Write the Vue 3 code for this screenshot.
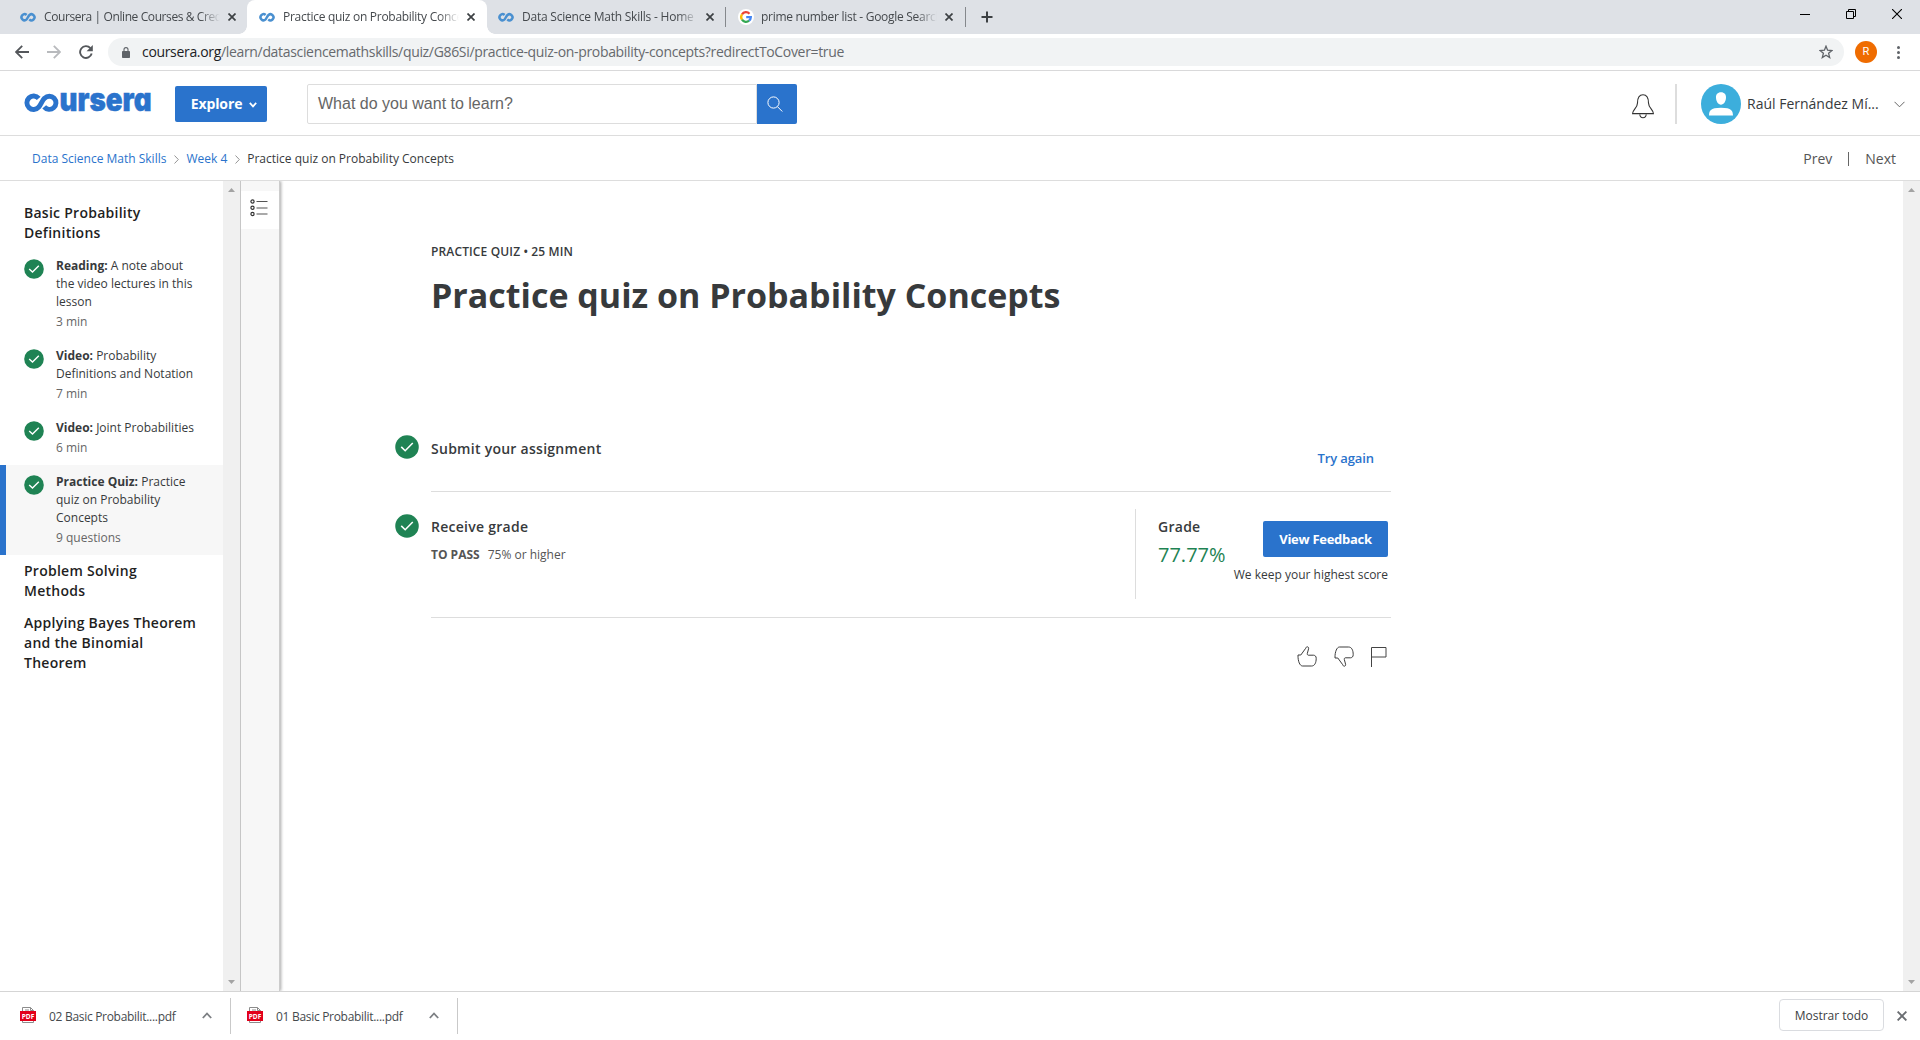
<script setup>
const tabs = [
  { title: 'Coursera | Online Courses & Credentials', icon: 'coursera', cls: 'tab-1' },
  { title: 'Practice quiz on Probability Concepts', icon: 'coursera', cls: 'tab-2 active' },
  { title: 'Data Science Math Skills - Home', icon: 'coursera', cls: 'tab-3' },
  { title: 'prime number list - Google Search', icon: 'google', cls: 'tab-4' },
]
const items = [
  { kind: 'Reading:', lines: ['A note about', 'the video lectures in this', 'lesson'], meta: '3 min' },
  { kind: 'Video:', lines: ['Probability', 'Definitions and Notation'], meta: '7 min' },
  { kind: 'Video:', lines: ['Joint Probabilities'], meta: '6 min' },
  { kind: 'Practice Quiz:', lines: ['Practice', 'quiz on Probability', 'Concepts'], meta: '9 questions', active: true },
]
const downloads = ['02 Basic Probabilit....pdf', '01 Basic Probabilit....pdf']
</script>

<template>
  <div class="window">
    <div class="tabstrip">
      <div v-for="t in tabs" :key="t.title" class="tab" :class="t.cls">
        <svg v-if="t.icon === 'coursera'" class="fav" width="16" height="16" viewBox="0 0 16 16">
          <path d="M6.6 6A3 3 0 1 0 6.6 10.4C7.500 9.500 8.300 7 9.500 6A3 3 0 1 1 9.300 10.400" fill="none" stroke="#4a90d0" stroke-width="2.500" />
        </svg>
        <svg v-else class="fav" width="16" height="16" viewBox="0 0 16 16">
          <circle cx="8" cy="8" r="8" fill="#fff" />
          <g fill="none" stroke-width="2.3">
            <path d="M4 5.3A4.8 4.8 0 0 1 11.5 4.7" stroke="#ea4335" />
            <path d="M4 5.3A4.8 4.8 0 0 0 4 10.7" stroke="#fbbc05" />
            <path d="M4 10.7A4.8 4.8 0 0 0 11.1 11.7" stroke="#34a853" />
            <path d="M11.1 11.7A4.8 4.8 0 0 0 12.8 8.2H8.2" stroke="#4285f4" />
          </g>
        </svg>
        <span class="tab-title">{{ t.title }}</span>
        <svg class="tab-x" width="8" height="8" viewBox="0 0 8 8"><path d="M.5.5l7 7M7.5.5l-7 7" stroke="#3c4043" stroke-width="1.7" /></svg>
      </div>
      <svg class="plus" width="12" height="12" viewBox="0 0 12 12"><path d="M6 .5v11M.5 6h11" stroke="#3c4043" stroke-width="2" /></svg>
      <div class="win-controls">
        <svg width="10" height="10" viewBox="0 0 10 10"><path d="M0 5.5h10" stroke="#000" /></svg>
        <svg width="10" height="10" viewBox="0 0 10 10"><path d="M.5 2.5h7v7h-7zM2.5 2.5v-2h7v7h-2" fill="none" stroke="#000" /></svg>
        <svg width="10" height="10" viewBox="0 0 10 10"><path d="M0 0l10 10M10 0L0 10" stroke="#000" stroke-width="1.1" /></svg>
      </div>
    </div>

    <div class="toolbar">
      <svg class="back" width="14" height="14" viewBox="0 0 14 14"><path d="M7.2.8L1 7l6.200 6.200M1 7h13" fill="none" stroke="#54575b" stroke-width="1.8" /></svg>
      <svg class="fwd" width="14" height="14" viewBox="0 0 14 14"><path d="M6.800.8L13 7l-6.200 6.200M13 7H0" fill="none" stroke="#b8babd" stroke-width="1.8" /></svg>
      <svg class="reload" width="14" height="14" viewBox="0 0 14 14"><path d="M11.400 3.100A5.900 5.900 0 1 0 12.700 8.600" fill="none" stroke="#54575b" stroke-width="1.900" /><path d="M13.800 0v6.200H7.600z" fill="#54575b" /></svg>
      <div class="omnibox">
        <svg class="lock" width="8" height="11" viewBox="0 0 8 11"><path d="M2 4.500V2.600a2 2 0 0 1 4 0v1.900" fill="none" stroke="#5f6368" stroke-width="1.100" /><rect y="4" width="8" height="7" rx=".8" fill="#5f6368" /></svg>
        <span class="url"><b>coursera.org</b>/learn/datasciencemathskills/quiz/G86Si/practice-quiz-on-probability-concepts?redirectToCover=true</span>
        <svg class="star" width="14" height="14" viewBox="0 0 14 14"><path d="M7 1.200l1.600 4 4.300.300-3.300 2.800 1.100 4.200L7 10.200l-3.700 2.300 1.100-4.200L1.100 5.500l4.300-.3z" fill="none" stroke="#5f6368" stroke-width="1.300" /></svg>
      </div>
      <div class="profile">R</div>
      <svg class="dots" width="3" height="13" viewBox="0 0 3 13" fill="#5f6368"><circle cx="1.500" cy="1.500" r="1.500" /><circle cx="1.500" cy="6.500" r="1.500" /><circle cx="1.500" cy="11.500" r="1.500" /></svg>
    </div>

    <header class="site-header">
      <svg class="logo" width="128" height="20" viewBox="0 0 128 20">
        <path d="M14.700 5.400A6.700 6.700 0 1 0 14.700 14.100C17 11.500 18 7.500 20.600 5.200A6.600 6.600 0 1 1 20.200 13.900" fill="none" stroke="#2a73cc" stroke-width="4.900" />
        <text x="35.500" y="18.300" textLength="92" lengthAdjust="spacingAndGlyphs" class="logo-text">ursera</text>
      </svg>
      <button class="explore">Explore
        <svg width="8" height="6" viewBox="0 0 8 6"><path d="M.8.900L4 4.400 7.200.9" fill="none" stroke="#fff" stroke-width="1.700" /></svg>
      </button>
      <div class="search">
        <div class="search-field">What do you want to learn?</div>
        <div class="search-btn">
          <svg width="16" height="16" viewBox="0 0 16 16"><circle cx="6.500" cy="6.500" r="5.600" fill="none" stroke="#fff" stroke-width="1" /><path d="M10.500 10.700l4.800 4.800" stroke="#fff" stroke-width="1" /></svg>
        </div>
      </div>
      <svg class="bell" width="22" height="25" viewBox="0 0 22 25"><path d="M5.500 9C5.500 4.500 6.500.700 11 .700S16.500 4.500 16.500 9C16.500 14 21.400 15.500 21.400 19.600H.6C.6 15.500 5.500 14 5.500 9zM7.800 20.500C8 22.800 9.500 23.700 11 23.700s3-.9 3.200-3.200" fill="none" stroke="#333" stroke-width="1.100" /></svg>
      <div class="vline"></div>
      <svg class="avatar" width="40" height="40" viewBox="0 0 40 40"><circle cx="20" cy="20" r="20" fill="#3caedc" /><path d="M20 8.300c3.400 0 5.200 2.300 5 5.500-.2 3.800-2.200 6.900-5 6.900s-4.800-3.100-5-6.900c-.2-3.200 1.600-5.500 5-5.500zM8 31.500C8.300 27 9 23.800 20 23.800s11.700 3.200 12 7.700z" fill="#fff" /></svg>
      <span class="user">Raúl Fernández Mí...</span>
      <svg class="chev" width="11" height="7" viewBox="0 0 11 7"><path d="M.500.800l5 5 5-5" fill="none" stroke="#666" /></svg>
    </header>

    <nav class="crumbs">
      <a class="c1">Data Science Math Skills</a>
      <svg width="5" height="9" viewBox="0 0 5 9"><path d="M.500.500l3.800 4-3.800 4" fill="none" stroke="#888" stroke-width=".9" /></svg>
      <a class="c2">Week 4</a>
      <svg width="5" height="9" viewBox="0 0 5 9"><path d="M.500.500l3.800 4-3.800 4" fill="none" stroke="#888" stroke-width=".9" /></svg>
      <span class="c3">Practice quiz on Probability Concepts</span>
      <span class="prev">Prev</span><i></i><span class="next">Next</span>
    </nav>

    <div class="body">
      <aside class="sidebar">
        <h3>Basic Probability<br />Definitions</h3>
        <div v-for="it in items" :key="it.meta" class="item" :class="{ current: it.active }">
          <svg class="check" width="20" height="20" viewBox="0 0 20 20"><circle cx="10" cy="10" r="9.800" fill="#1f8354" /><path d="M5.200 9.900l3.300 3.200 6.300-6.400" fill="none" stroke="#fff" stroke-width="1.400" /></svg>
          <div>
            <div class="item-title"><b>{{ it.kind }}</b>&nbsp;<template v-for="(l, i) in it.lines" :key="l"><br v-if="i" />{{ l }}</template></div>
            <div class="meta">{{ it.meta }}</div>
          </div>
        </div>
        <h3>Problem Solving<br />Methods</h3>
        <h3>Applying Bayes Theorem<br />and the Binomial<br />Theorem</h3>
      </aside>
      <div class="scroll">
        <svg width="7" height="4" viewBox="0 0 7 4"><path d="M0 4L3.500 0 7 4z" fill="#a3a3a3" /></svg>
        <svg width="7" height="4" viewBox="0 0 7 4"><path d="M0 0L3.500 4 7 0z" fill="#a3a3a3" /></svg>
      </div>
      <div class="rail">
        <div class="rail-btn">
          <svg width="18" height="18" viewBox="0 0 18 18" fill="none" stroke="#333"><circle cx="2.500" cy="2.500" r="1.600" stroke-width="1.200" /><circle cx="2.500" cy="8.800" r="1.600" stroke-width="1.200" /><circle cx="2.500" cy="15" r="1.600" stroke-width="1.200" /><path d="M6.500 2.500H17.500M6.500 9H17.500M6.500 15H17.500" stroke-width="1.200" stroke="#555" /></svg>
        </div>
      </div>
      <main class="main">
        <div class="kicker">PRACTICE QUIZ • 25 MIN</div>
        <h1>Practice quiz on Probability Concepts</h1>
        <section class="row submit">
          <svg class="check" width="24" height="24" viewBox="0 0 20 20"><circle cx="10" cy="10" r="9.800" fill="#1f8354" /><path d="M5.200 9.900l3.300 3.200 6.300-6.400" fill="none" stroke="#fff" stroke-width="1.300" /></svg>
          <div class="row-body"><h4 class="t-submit">Submit your assignment</h4><a class="try">Try again</a></div>
        </section>
        <section class="row receive">
          <svg class="check" width="24" height="24" viewBox="0 0 20 20"><circle cx="10" cy="10" r="9.800" fill="#1f8354" /><path d="M5.200 9.900l3.300 3.200 6.300-6.400" fill="none" stroke="#fff" stroke-width="1.300" /></svg>
          <div class="row-body">
            <div class="left"><h4>Receive grade</h4><div class="pass"><b>TO PASS</b><span>75% or higher</span></div></div>
            <div class="grade">
              <div><h4>Grade</h4><div class="score">77.77%</div></div>
              <div class="feedback"><button>View Feedback</button><p>We keep your highest score</p></div>
            </div>
          </div>
        </section>
        <div class="actions">
          <svg width="20" height="21" viewBox="0 0 20 21"><path d="M1 9H3.800L8.700 2.300C9 1.300 9.600.800 10.300.800c.9 0 1.500.8 1.300 1.900L10.300 7.500c0 .9.200 1.700 1 1.700h5.200c1.700.1 2.700 1.200 2.700 3.100 0 4.500-1.500 7.700-4.700 7.700H5.500C3 20 .8 15.500 1 9z" fill="none" stroke="#333" stroke-width=".95" /></svg>
          <svg width="20" height="21" viewBox="0 0 20 21"><path d="M1 12H3.800L8.700 18.700c.3 1 .9 1.500 1.600 1.500.9 0 1.500-.8 1.300-1.900L10.300 13.500c0-.9.200-1.700 1-1.700h5.200c1.700-.1 2.700-1.200 2.700-3.100C19.200 4.200 17.700 1 14.500 1H5.500C3 1 .8 5.500 1 12z" fill="none" stroke="#333" stroke-width=".95" /></svg>
          <svg width="16" height="21" viewBox="0 0 16 21"><path d="M.5 21V1.500h14.500v9.500H.5" fill="none" stroke="#444" /></svg>
        </div>
      </main>
      <div class="scroll right">
        <svg width="7" height="4" viewBox="0 0 7 4"><path d="M0 4L3.500 0 7 4z" fill="#a3a3a3" /></svg>
        <svg width="7" height="4" viewBox="0 0 7 4"><path d="M0 0L3.500 4 7 0z" fill="#a3a3a3" /></svg>
      </div>
    </div>

    <footer class="downloads">
      <div v-for="d in downloads" :key="d" class="dl">
        <svg width="16" height="16" viewBox="0 0 16 16"><path d="M2.500 15.500V.500h8l3 3v12z" fill="#fff" stroke="#8c8c8c" /><path d="M10.500.500v3h3M5 3h4" fill="none" stroke="#8c8c8c" /><rect y="4" width="16" height="10" fill="#e2001a" /><text x="8" y="12" text-anchor="middle" textLength="12.500" lengthAdjust="spacingAndGlyphs" class="pdf">PDF</text></svg>
        <span>{{ d }}</span>
        <svg class="up" width="10" height="7" viewBox="0 0 10 7"><path d="M.800 6L5 1.500 9.200 6" fill="none" stroke="#7c7f83" stroke-width="1.800" /></svg>
      </div>
      <div class="show-all">Mostrar todo</div>
      <svg class="close" width="10" height="10" viewBox="0 0 10 10"><path d="M.600.600l8.800 8.800M9.400.600L.600 9.400" stroke="#6a6d71" stroke-width="1.900" /></svg>
    </footer>
  </div>
</template>

<style>
body { background: #fff; }
</style>

<style scoped>
* { box-sizing: border-box; }
svg { display: block; flex: none; }
h1, h3, h4, p { margin: 0; }
.window { width: 1920px; height: 1040px; display: flex; flex-direction: column; font-family: "Open Sans", sans-serif; color: #373a3c; background: #fff; overflow: hidden; }

.tabstrip { height: 34px; background: #dee1e6; display: flex; font-family: "Open Sans", sans-serif; }
.tab { height: 34px; display: flex; align-items: center; position: relative; flex: none; }
.fav { margin-right: 8px; }
.tab-title { flex: none; overflow: hidden; white-space: nowrap; font-size: 12px; line-height: 20px; letter-spacing: -.28px; color: #45494d; -webkit-mask-image: linear-gradient(90deg, #000 calc(100% - 20px), transparent); mask-image: linear-gradient(90deg, #000 calc(100% - 20px), transparent); }
.tab-x { margin-left: 8px; }
.tab-1 { width: 247px; padding-left: 20px; }
.tab-1 .tab-title { width: 176px; letter-spacing: -.4px; }
.tab-2 { width: 240px; padding-left: 12px; background: #fff; border-radius: 8px 8px 0 0; }
.tab-2 .tab-title { width: 176px; }
.tab-3 { width: 238px; padding-left: 11px; }
.tab-3 .tab-title { width: 176px; letter-spacing: -.22px; }
.tab-4 { width: 240px; padding-left: 13px; }
.tab-4 .fav { margin-right: 7px; }
.tab-4 .tab-title { width: 176px; }
.tab-3::after, .tab-4::after { content: ""; position: absolute; right: -1px; top: 7px; width: 1px; height: 20px; background: #85888c; }
.tab-2::before, .tab-2::after { content: ""; position: absolute; bottom: 0; width: 8px; height: 8px; }
.tab-2::before { left: -8px; background: radial-gradient(circle at 0 0, transparent 7.500px, #fff 8px); }
.tab-2::after { right: -8px; background: radial-gradient(circle at 100% 0, transparent 7.500px, #fff 8px); }
.plus { margin: 11px 0 0 16px; }
.win-controls { margin-left: auto; display: flex; gap: 36px; padding: 9px 18px 0 0; }

.toolbar { height: 37px; border-bottom: 1px solid #d9d9da; display: flex; align-items: center; padding-left: 15px; }
.fwd { margin-left: 18px; }
.reload { margin-left: 18px; }
.omnibox { margin: 0 0 0 15px; width: 1736px; height: 28px; border-radius: 14px; background: #f1f3f4; display: flex; align-items: center; padding: 0 11px 0 14px; }
.url { margin-left: 12px; font-size: 14px; line-height: 20px; color: #66696d; letter-spacing: -.33px; white-space: nowrap; }
.url b { font-weight: 400; color: #202124; }
.star { margin-left: auto; }
.profile { margin-left: 11px; width: 22px; height: 22px; border-radius: 50%; background: #ef6c00; color: #fff; font: 11px/22px Roboto, sans-serif; text-align: center; }
.dots { margin-left: 20px; }

.site-header { height: 65px; border-bottom: 1px solid #ddd; display: flex; align-items: center; padding: 2px 0 0 24px; }
.logo-text { font: 900 32px Inter, sans-serif; font-feature-settings: "cv11"; fill: #2a73cc; stroke: #2a73cc; stroke-width: .5; }
.logo { margin-top: -2px; overflow: visible; }
.explore { margin: 0 0 0 23px; width: 92px; height: 36px; border: 0; border-radius: 2px; background: #2a73cc; color: #fff; font: 700 14px/20px "Open Sans", sans-serif; display: flex; align-items: center; justify-content: center; gap: 7px; padding: 0 0 0 6px; letter-spacing: -.1px; }
.explore svg { margin-top: 2px; }
.search { margin-left: 40px; display: flex; width: 490px; height: 40px; }
.search-field { flex: 1; border: 1px solid #ddd; border-radius: 2px 0 0 2px; font: 16px/38px "Liberation Sans", Arial, sans-serif; padding-left: 10px; color: #666; }
.search-btn { width: 40px; padding-right: 4px; background: #2a73cc; display: grid; place-items: center; border-radius: 0 2px 2px 0; }
.bell { margin: 4px 0 0 835px; }
.vline { margin-left: 21px; width: 2px; height: 40px; background: #ddd; }
.avatar { margin-left: 24px; }
.user { margin-left: 6px; width: 147px; font-size: 14px; line-height: 20px; white-space: nowrap; }

.crumbs { height: 45px; border-bottom: 1px solid #ddd; display: flex; align-items: center; padding: 1px 0 0 32px; font-size: 12px; line-height: 18px; white-space: nowrap; }
.crumbs a { color: #2a73cc; }
.crumbs svg { margin: 2px 7px 0 8px; }
.prev { margin-left: auto; font-size: 14px; color: #555; }
.crumbs i { width: 1px; height: 14px; background: #666; margin: 0 16px 0 16px; }
.next { font-size: 14px; color: #555; margin-right: 24px; }

.body { height: 810px; display: flex; }
.sidebar { width: 223px; padding-top: 16px; }
h3 { padding: 6px 0 6px 24px; font-size: 14px; line-height: 20px; font-weight: 600; color: #1f1f1f; letter-spacing: .26px; white-space: nowrap; }
.item { display: flex; padding: 8px 0 8px 24px; font-size: 12px; line-height: 18px; white-space: nowrap; }
.item .check { margin: 2px 12px 0 0; }
.item b { font-weight: 700; }
.meta { margin-top: 2px; color: #666; }
.current { background: #f7f7f7; border-left: 6px solid #2a73cc; padding-left: 18px; }
.scroll { width: 17px; background: #f0f0f0; display: flex; flex-direction: column; justify-content: space-between; align-items: center; padding: 7px 0; }
.rail { width: 40px; border-left: 1px solid #c6c6c6; border-right: 1px solid #ccc; background: #f7f7f7; padding-top: 10px; box-shadow: 1px 0 3px rgba(0, 0, 0, .35); clip-path: inset(0 -4px 0 0); }
.rail-btn { height: 38px; background: #fff; padding: 8px 0 0 9px; }
.main { flex: 1; padding: 62px 0 0 115px; }
.kicker { margin-left: 36px; font-size: 12px; line-height: 18px; font-weight: 600; letter-spacing: .14px; }
h1 { margin: 13px 0 0 36px; font-size: 34px; line-height: 42px; font-weight: 700; white-space: nowrap; }
.row { display: flex; width: 996px; }
.row > .check { margin-right: 12px; }
.row-body { width: 960px; border-bottom: 1px solid #ddd; display: flex; justify-content: space-between; }
h4 { font-size: 14px; line-height: 20px; font-weight: 600; letter-spacing: .27px; }
.submit { margin-top: 119px; height: 57px; }
.submit h4 { margin-top: 4px; }
.try { margin: 13px 17px 0 0; font-size: 13px; line-height: 20px; font-weight: 600; color: #2a73cc; letter-spacing: -.1px; }
.receive { height: 126px; padding-top: 17px; }
.receive > .check { margin-top: 5px; }
.left h4 { margin-top: 8px; }
.pass { margin-top: 9px; font-size: 12px; line-height: 18px; color: #555; }
.pass b { font-weight: 700; margin-right: 8px; }
.grade { width: 256px; height: 90px; border-left: 1px solid #ddd; padding: 8px 3px 0 22px; display: flex; justify-content: space-between; }
.score { font-size: 20px; line-height: 28px; margin-top: 4px; color: #1f8354; }
.feedback { display: flex; flex-direction: column; align-items: flex-end; margin-left: -20px; }
.feedback button { margin-top: 4px; width: 125px; height: 36px; border: 0; border-radius: 2px; background: #2a73cc; color: #fff; font: 700 13px/20px "Open Sans", sans-serif; padding: 0; letter-spacing: -.28px; }
.feedback p { margin-top: 9px; font-size: 12px; line-height: 18px; white-space: nowrap; }
.actions { display: flex; width: 996px; padding: 28px 4px 0 0; justify-content: flex-end; gap: 17px; }

.downloads { height: 49px; border-top: 1px solid #d5d5d5; display: flex; align-items: center; padding-bottom: 0; }
.dl { width: 231px; height: 36px; display: flex; align-items: center; padding-left: 20px; border-right: 1px solid #c9c9c9; font-size: 12px; line-height: 20px; }
.dl + .dl { width: 227px; padding-left: 16px; }
.dl span { margin: 2px 0 0 13px; width: 153px; white-space: nowrap; color: #45494d; letter-spacing: -.3px; }
.dl > svg { margin-top: -2px; }
.pdf { font: 700 7px "Open Sans", sans-serif; fill: #fff; }
.show-all { margin: -2px 0 0 auto; width: 105px; height: 32px; border: 1px solid #dadce0; border-radius: 4px; text-align: center; font-size: 12px; line-height: 31px; color: #3c4043; }
.close { margin: 0 13px 0 13px; }
</style>
